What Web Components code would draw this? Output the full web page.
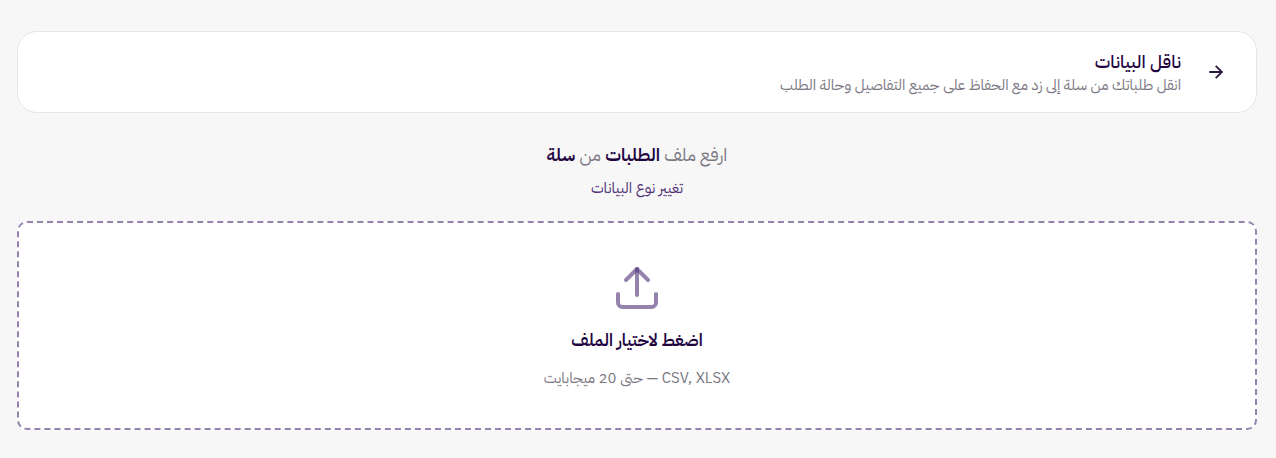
<!DOCTYPE html>
<html lang="ar" dir="rtl">

<head>
    <meta charset="UTF-8">
    <meta name="viewport" content="width=device-width, initial-scale=1.0">
    <title>ناقل البيانات</title>
    <style>
        body {
            --ink: #21053f;
            --muted: #7c7884;
            --accent: #4e3076;
            --dash: #9583ad;
            margin: 0;
            background: #f7f7f7;
            color: var(--ink);
            font-family: "IBM Plex Sans Arabic", "DejaVu Sans", sans-serif;
        }
    </style>
</head>

<body>
    <template id="page-template">
        <style>
            :host {
                display: flex;
                flex-direction: column;
                padding: 31px 19px 28px 17px;
            }
        </style>
        <slot></slot>
    </template>

    <template id="header-template">
        <style>
            :host {
                display: flex;
                align-items: center;
                gap: 15px;
                box-sizing: border-box;
                min-height: 82px;
                padding: 16px 20px;
                border: 1px solid #e6e6e8;
                border-radius: 20px;
                background: #fff;
            }
            button {
                display: flex;
                align-items: center;
                justify-content: center;
                width: 40px;
                height: 40px;
                padding: 0;
                border: 0;
                background: none;
                color: #2b1a3d;
                cursor: pointer;
            }
            h1, p {
                margin: 0;
            }
            h1 {
                font-size: 18px;
                font-weight: 500;
                line-height: 26px;
            }
            p {
                color: var(--muted);
                font-size: 15px;
                line-height: 20px;
            }
        </style>
        <button type="button" aria-label="رجوع">
            <svg width="20" height="20" viewBox="0 0 20 20" fill="none" stroke="currentColor" stroke-width="1.8">
                <path d="M3.3 10h12.2M9.7 3.8l6.2 6.2-6.2 6.2"/>
            </svg>
        </button>
        <div>
            <h1><slot name="title"></slot></h1>
            <p><slot name="description"></slot></p>
        </div>
    </template>

    <template id="step-template">
        <style>
            :host {
                display: flex;
                flex-direction: column;
                align-items: center;
                gap: 8px;
                padding: 28px 0 22px;
                text-align: center;
            }
            h2 {
                margin: 0;
                color: var(--muted);
                font-size: 18px;
                font-weight: 400;
                line-height: 28px;
            }
            ::slotted(b) {
                color: var(--ink);
                font-weight: 600;
            }
            a {
                color: var(--accent);
                font-size: 15px;
                line-height: 22px;
                text-decoration: none;
            }
        </style>
        <h2><slot></slot></h2>
        <a href="#"><slot name="link"></slot></a>
    </template>

    <template id="upload-template">
        <style>
            :host {
                display: block;
            }
            label {
                display: flex;
                flex-direction: column;
                align-items: center;
                padding: 41px 20px 38px;
                border: 2px dashed var(--dash);
                border-radius: 10px;
                background: #fff;
                cursor: pointer;
            }
            input {
                position: absolute;
                width: 1px;
                height: 1px;
                opacity: 0;
            }
            svg {
                display: block;
                margin-bottom: 15px;
            }
            strong {
                margin-bottom: 11px;
                font-size: 17px;
                font-weight: 600;
                line-height: 28px;
            }
            small {
                color: var(--muted);
                font-size: 15px;
                line-height: 24px;
            }
        </style>
        <label for="file">
            <!-- each stroke is translucent on its own, so the arrow tip is darker -->
            <svg width="48" height="48" viewBox="0 0 48 48" fill="none" stroke="#4e3076" stroke-opacity="0.6" stroke-width="4" stroke-linecap="round" stroke-linejoin="round">
                <path d="M5 30v8.5a4.500 4.500 0 0 0 4.500 4.500h29a4.500 4.500 0 0 0 4.500-4.500V30"/>
                <path d="M13 16 24 5l11 11"/>
                <path d="M24 5v26"/>
            </svg>
            <strong><slot name="title"></slot></strong>
            <small><slot name="hint"></slot></small>
            <input id="file" type="file" accept=".csv,.xlsx">
        </label>
    </template>

    <transfer-page>
        <page-header>
            <span slot="title">ناقل البيانات</span>
            <span slot="description">انقل طلباتك من سلة إلى زد مع الحفاظ على جميع التفاصيل وحالة الطلب</span>
        </page-header>
        <upload-step>ارفع ملف <b>الطلبات</b> من <b>سلة</b><span slot="link">تغيير نوع البيانات</span></upload-step>
        <file-upload>
            <span slot="title">اضغط لاختيار الملف</span>
            <span slot="hint">CSV, XLSX — حتى 20 ميجابايت</span>
        </file-upload>
    </transfer-page>

    <script type="module">

        class TemplateElement extends HTMLElement {
            constructor() {
                super();
                this.attachShadow({ mode: 'open' });
            }

            connectedCallback() {
                if (this.shadowRoot.childNodes.length) return;
                const tmp = document.getElementById(this.constructor.template);
                this.shadowRoot.appendChild(tmp.content.cloneNode(true));
            }
        }

        class TransferPage extends TemplateElement {
            static template = 'page-template';
        }

        class PageHeader extends TemplateElement {
            static template = 'header-template';

            connectedCallback() {
                super.connectedCallback();
                this.shadowRoot.querySelector('button').addEventListener('click', () => history.back());
            }
        }

        class UploadStep extends TemplateElement {
            static template = 'step-template';
        }

        class FileUpload extends TemplateElement {
            static template = 'upload-template';
        }

        customElements.define('transfer-page', TransferPage);
        customElements.define('page-header', PageHeader);
        customElements.define('upload-step', UploadStep);
        customElements.define('file-upload', FileUpload);
    </script>
</body>

</html>
